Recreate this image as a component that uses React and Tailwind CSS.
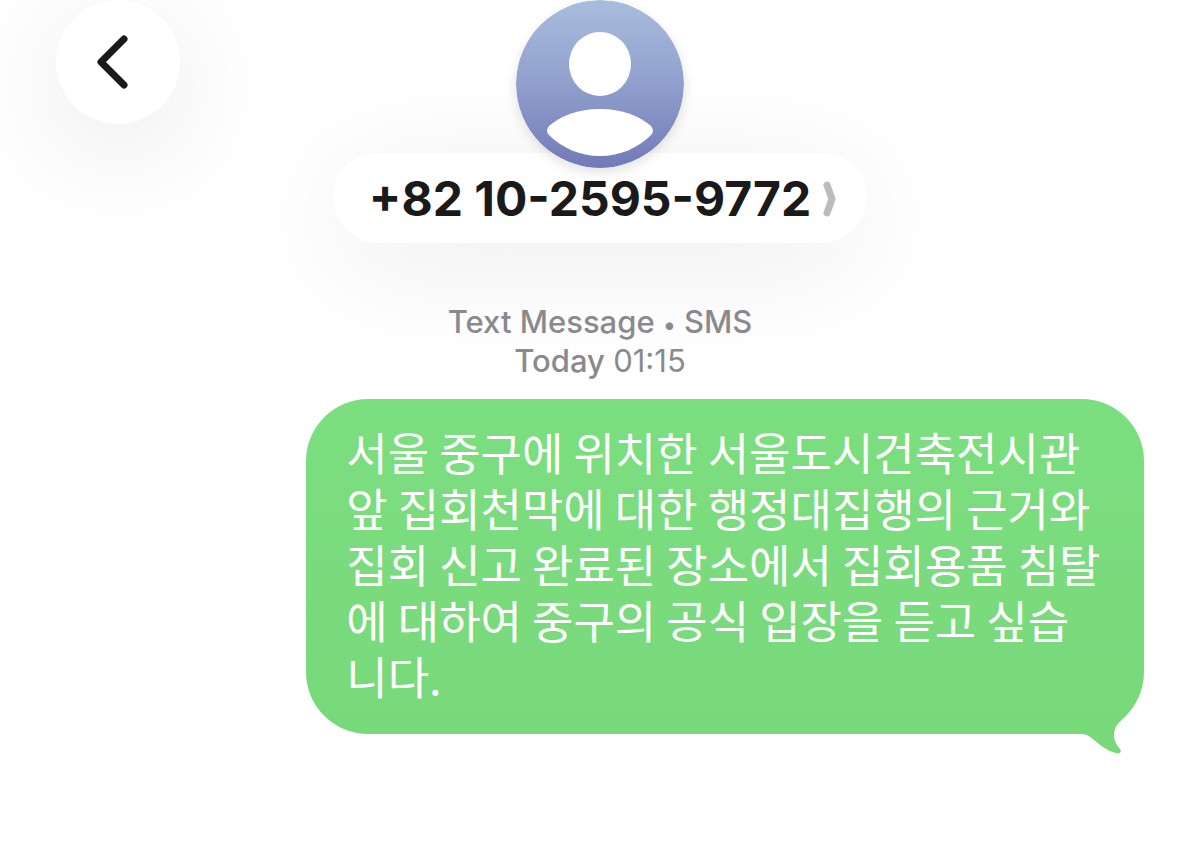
const message =
  '서울 중구에 위치한 서울도시건축전시관 앞 집회천막에 대한 행정대집행의 근거와 집회 신고 완료된 장소에서 집회용품 침탈에 대하여 중구의 공식 입장을 듣고 싶습니다.'

function Avatar() {
  return (
    <svg viewBox="0 0 168 168" className="relative z-10 w-42 h-42 rounded-full shadow-[0_4px_12px_rgba(0,0,0,0.12)]" aria-hidden="true">
      <defs>
        <linearGradient id="avatar-bg" x1="0" y1="0" x2="0" y2="1">
          <stop offset="0" stopColor="#a9bddd" />
          <stop offset="0.5" stopColor="#909fcd" />
          <stop offset="1" stopColor="#727ab8" />
        </linearGradient>
      </defs>
      <circle cx="84" cy="84" r="84" fill="url(#avatar-bg)" />
      <ellipse cx="84" cy="64" rx="31" ry="32" fill="#fff" />
      <path
        d="M33 126C44 116 62 109 84 109S124 116 135 126Q139 131 135 135C122 148 104 156 84 156S46 148 33 135Q29 131 33 126Z"
        fill="#fff"
      />
    </svg>
  )
}

function Header() {
  return (
    <header className="grid grid-cols-[1fr_auto_1fr] items-start">
      <button
        aria-label="Back"
        className="w-31 h-31 rounded-full bg-white flex items-center justify-center shadow-[0_24px_120px_rgba(0,0,0,0.10)]"
      >
        <svg viewBox="0 0 124 124" className="w-31 h-31" fill="none">
          <path d="M68 39L45 62L68 85" stroke="#1a1a1a" strokeWidth="7" strokeLinecap="round" strokeLinejoin="round" />
        </svg>
      </button>

      <div className="flex flex-col items-center">
        <Avatar />
        <button className="-mt-[15px] h-[90px] pt-0.5 pl-9 pr-7 flex items-center gap-3 rounded-full bg-white shadow-[0_20px_120px_rgba(0,0,0,0.08)]">
          <span className="text-[48px] leading-none font-bold text-[#1a1a1a] whitespace-nowrap">+82 10-2595-9772</span>
          <svg viewBox="0 0 16 36" className="w-4 h-9" fill="none">
            <path d="M4 4L9 18L4 32" stroke="#bcbcbc" strokeWidth="7" strokeLinecap="round" strokeLinejoin="round" />
          </svg>
        </button>
      </div>
    </header>
  )
}

function Bubble({ children }) {
  return (
    <div className="relative w-[77%] ml-auto px-10 pt-[25px] pb-[30px] rounded-[62px] bg-linear-to-b from-[#7bde7f] to-[#78d97b]">
      <p className="font-['Noto_Sans_CJK_KR',sans-serif] text-[45px] leading-[56px] text-white">{children}</p>
      <svg viewBox="0 0 60 60" className="absolute right-0 -bottom-5 w-[60px] h-[60px]" aria-hidden="true">
        <path
          d="M44 19C38 27 30 30 30 41C30 47 33 51 36 55C38 58 36 60 32 59C22 57 14 49 5 42Q2 40 -4 40L10 20Z"
          fill="#78d97b"
        />
      </svg>
    </div>
  )
}

function App() {
  return (
    <div className="min-h-screen overflow-hidden bg-white px-14 pb-10 font-['Inter',sans-serif]">
      <Header />
      <main>
        <div className="mt-[59px] mb-[19px] text-center text-[31px] leading-[39px] font-medium text-[#8a8a8e]">
          <p>
            Text Message <span className="text-[24px] leading-none align-middle">•</span> SMS
          </p>
          <p>
            Today <time className="font-normal">01:15</time>
          </p>
        </div>
        <Bubble>{message}</Bubble>
      </main>
    </div>
  )
}

export default App
